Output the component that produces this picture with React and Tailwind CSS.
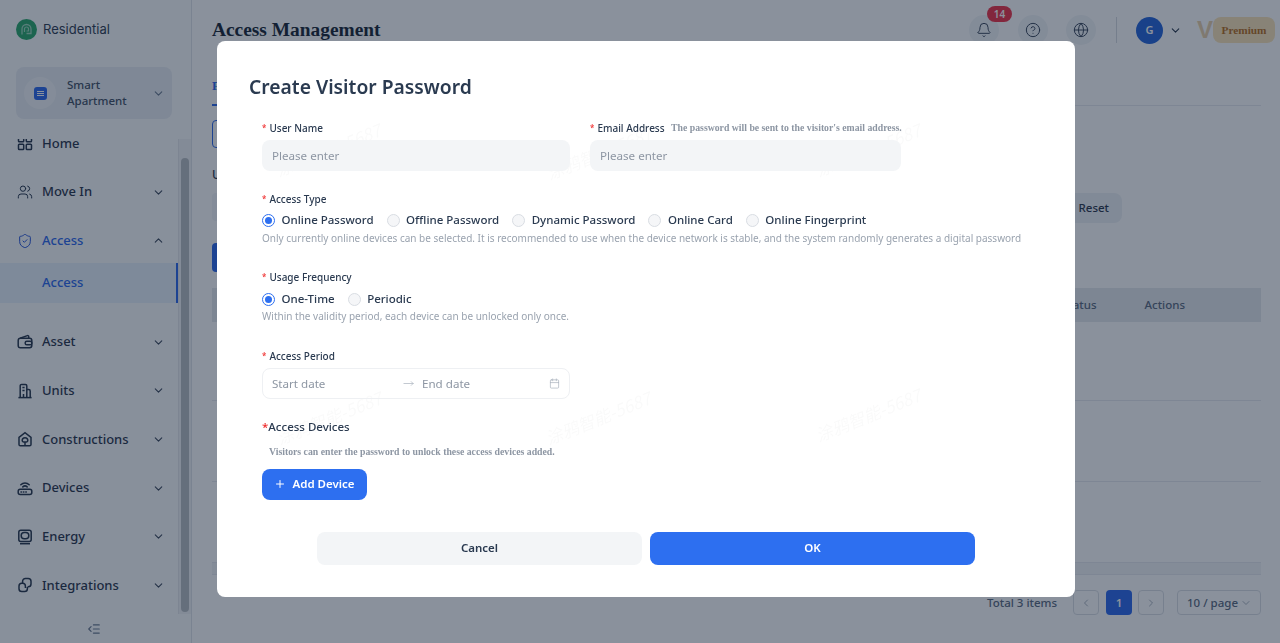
import { Bell, CircleHelp, Globe, ChevronDown, ChevronUp, ChevronLeft, ChevronRight, Users, ShieldCheck, IndentDecrease, Calendar, Plus, MoveRight } from 'lucide-react';

const sans = 'font-["Noto_Sans",sans-serif]';

function HomeIcon(props) {
  return (
    <svg viewBox="0 0 16 16" fill="none" stroke="currentColor" strokeWidth="1.2" {...props}>
      <rect x="1.5" y="1.5" width="5.2" height="5.2" rx="0.8" />
      <rect x="9.3" y="1.5" width="5.2" height="5.2" rx="0.8" />
      <rect x="1.5" y="9.3" width="5.2" height="5.2" rx="0.8" />
      <rect x="9.3" y="9.3" width="5.2" height="5.2" rx="0.8" />
    </svg>
  );
}

function WalletIcon(props) {
  return (
    <svg viewBox="0 0 16 16" fill="none" stroke="currentColor" strokeWidth="1.2" {...props}>
      <rect x="1.2" y="4.2" width="13.6" height="9.6" rx="2.2" />
      <path d="M3 4.2 10.4 1.6c.7-.2 1.3.3 1.3 1v1.6" />
      <rect x="8.2" y="7.2" width="6.6" height="3.6" rx="1.6" />
    </svg>
  );
}

function UnitsIcon(props) {
  return (
    <svg viewBox="0 0 16 16" fill="none" stroke="currentColor" strokeWidth="1.2" {...props}>
      <path d="M3.2 14.6V2.8c0-.8.6-1.400 1.400-1.400h3.800c.8 0 1.400.6 1.400 1.400v11.800" />
      <path d="M9.800 6.600h2c.8 0 1.400.6 1.400 1.400v6.600" />
      <path d="M1.400 14.600h13.200" />
      <path d="M5.400 4.600h2.200M5.400 7.400h2.200M6.500 11v3.600" />
    </svg>
  );
}

function TreeHouseIcon(props) {
  return (
    <svg viewBox="0 0 16 16" fill="none" stroke="currentColor" strokeWidth="1.2" {...props}>
      <path d="M2 6.4 8 1.6l6 4.8v7a1.4 1.4 0 0 1-1.4 1.4H3.4A1.4 1.4 0 0 1 2 13.4z" />
      <path d="M5.2 9.6a2.8 2.8 0 0 1 5.6 0c0 .8-.6 1.3-1.3 1.3H6.5c-.7 0-1.3-.5-1.3-1.3z" />
      <path d="M8 10.9v3.9" />
    </svg>
  );
}

function DeviceIcon(props) {
  return (
    <svg viewBox="0 0 16 16" fill="none" stroke="currentColor" strokeWidth="1.2" strokeLinecap="round" {...props}>
      <rect x="1.2" y="9.200" width="13.600" height="5.400" rx="2" />
      <path d="M4 11.900h.5M6.400 11.900h.5M8.800 11.900h.5" />
      <path d="M3.800 4.800a6 6 0 0 1 8.400 0" />
      <path d="M5.800 6.900a3.200 3.200 0 0 1 4.400 0" />
    </svg>
  );
}

function EnergyIcon(props) {
  return (
    <svg viewBox="0 0 16 16" fill="none" stroke="currentColor" strokeWidth="1.2" {...props}>
      <rect x="1.8" y="1.2" width="12.4" height="11.2" rx="2" />
      <rect x="4.2" y="3.6" width="7.6" height="6.2" rx="3" />
      <path d="M3 14.7h10" />
    </svg>
  );
}

function LinkIcon(props) {
  return (
    <svg viewBox="0 0 16 16" fill="none" stroke="currentColor" strokeWidth="1.2" {...props}>
      <path d="M5.6 6V4.2a2.8 2.8 0 0 1 2.8-2.8h2.8A2.8 2.8 0 0 1 14 4.2V7a2.8 2.8 0 0 1-2.8 2.8h-.6" />
      <path d="M10.4 10v1.8a2.8 2.8 0 0 1-2.8 2.8H4.8A2.8 2.8 0 0 1 2 11.8V9a2.8 2.8 0 0 1 2.8-2.8h.8A2.8 2.8 0 0 1 8.4 9v2" />
    </svg>
  );
}

function LogoIcon() {
  return (
    <svg viewBox="0 0 21 21" className="w-[21px] h-[21px] shrink-0">
      <circle cx="10.5" cy="10.5" r="10.5" fill="#22a565" />
      <path d="M6 15.5V10a4.5 4.5 0 0 1 9 0v4.5h-4.5" fill="none" stroke="#ffffff" strokeOpacity="0.55" strokeWidth="1.3" />
      <path d="M8.5 13v-3a2 2 0 0 1 4 0v2h-2" fill="none" stroke="#ffffff" strokeOpacity="0.55" strokeWidth="1.2" />
    </svg>
  );
}

const menuAfter = [
  { label: 'Asset', icon: WalletIcon },
  { label: 'Units', icon: UnitsIcon },
  { label: 'Constructions', icon: TreeHouseIcon },
  { label: 'Devices', icon: DeviceIcon },
  { label: 'Energy', icon: EnergyIcon },
  { label: 'Integrations', icon: LinkIcon },
];

function MenuRow({ icon: Icon, label, active, open, arrow = true }) {
  const Chevron = open ? ChevronUp : ChevronDown;
  return (
    <div className="h-[48.7px] flex items-center pl-[17px] pr-[13px]">
      <Icon className={`w-[16px] h-[16px] shrink-0 ${active ? 'text-[#1d4ed8]' : 'text-[#1f2f45]'}`} strokeWidth={1.5} />
      <span className={`ml-[9px] flex-1 text-[13px] font-medium ${active ? 'text-[#2563eb]' : 'text-[#1f2f45]'}`}>{label}</span>
      {arrow && <Chevron className="w-[13px] h-[13px] text-[#334155]" />}
    </div>
  );
}

function Sidebar() {
  return (
    <aside className="w-[192px] shrink-0 h-full border-r border-[#dfe3e8] bg-[#fbfcfd] flex flex-col">
      <div className="flex items-center pl-[16px] h-[59px] shrink-0">
        <LogoIcon />
        <span className="ml-[6px] text-[13px] font-['Inter',sans-serif] text-[#26354a]">Residential</span>
      </div>
      <div className="ml-[16px] w-[156px] mt-[8px] h-[52px] rounded-lg bg-[#e8edf2] flex items-center pl-[8px] pr-[7px] shrink-0">
        <div className="w-[32px] h-[32px] rounded-full bg-[#f3f5f8] flex items-center justify-center">
          <div className="w-[13px] h-[13px] rounded-[3px] bg-[#2563eb] flex flex-col justify-center gap-[1px] px-[3px]">
            <div className="h-[1px] bg-white" />
            <div className="h-[1px] bg-white" />
            <div className="h-[1px] bg-white" />
          </div>
        </div>
        <div className="ml-[11px] flex-1 text-[11.5px] leading-[16px] font-medium text-[#3a495e]">Smart<br />Apartment</div>
        <ChevronDown className="w-[13px] h-[13px] text-[#64748b]" />
      </div>

      <div className="mt-[20px] flex-1 min-h-0 flex overflow-hidden">
        <nav className="w-[178px] shrink-0 -mt-[20px]">
          <MenuRow icon={HomeIcon} label="Home" arrow={false} />
          <MenuRow icon={Users} label="Move In" />
          <MenuRow icon={ShieldCheck} label="Access" active open />
          <div className="-mt-[2px] h-10 pl-[42px] flex items-center text-[13px] font-medium text-[#2563eb] bg-[#e6f0fa] border-r-2 border-[#2563eb]">Access</div>
          <div className="mt-[14.6px]">
            {menuAfter.map((m) => (
              <MenuRow key={m.label} icon={m.icon} label={m.label} />
            ))}
          </div>
        </nav>
        <div className="w-[13px] bg-[#f1f3f5] border-l border-[#e4e7eb] pl-[2px] h-[475px]">
          <div className="mt-[19px] w-[8px] h-[454px] rounded-full bg-[#b5babf]" />
        </div>
      </div>

      <div className="h-[29px] flex items-center justify-center pr-[3px] shrink-0">
        <IndentDecrease className="w-[14px] h-[14px] text-[#64748b]" />
      </div>
    </aside>
  );
}

function RoundIcon({ icon: Icon, className = '' }) {
  return (
    <div className={`w-[30px] h-[30px] rounded-full bg-[#f1f4f7] flex items-center justify-center ${className}`}>
      <Icon className="w-[16px] h-[16px] text-[#334155]" strokeWidth={1.5} />
    </div>
  );
}

function PageBehind() {
  return (
    <main className="flex-1 min-w-0 h-full pl-[20px] pr-[19px] flex flex-col">
      <header className="h-[60px] shrink-0 flex items-center">
        <h1 className="flex-1 text-[19.4px] font-bold font-['Liberation_Serif',serif] text-[#111c2e]">Access Management</h1>
        <div className="relative">
          <RoundIcon icon={Bell} />
          <span className="absolute -top-[9px] left-[18px] w-[25px] h-[16px] rounded-full bg-[#ef2b41] text-white text-[10px] font-semibold flex items-center justify-center">14</span>
        </div>
        <RoundIcon icon={CircleHelp} className="ml-[19px]" />
        <RoundIcon icon={Globe} className="ml-[18px]" />
        <div className="ml-[20px] w-px h-[26px] bg-[#d5d9df]" />
        <div className="ml-[19px] w-[27px] h-[27px] rounded-full bg-[#1d5fd8] text-white text-[11px] font-semibold flex items-center justify-center">G</div>
        <ChevronDown className="ml-[6px] w-[13px] h-[13px] text-[#1f2f45]" />
        <span className="ml-[15px] w-[16px] text-[24px] leading-none font-bold font-['Liberation_Sans',sans-serif] text-[#e9cfa6]">V</span>
        <span className="-mr-[14px] w-[62px] h-[26px] rounded-lg bg-[#fbe3b5] text-[#b56a17] text-[11.3px] font-bold font-['Liberation_Serif',serif] flex items-center justify-center">Premium</span>
      </header>
      <div className="h-[46px] shrink-0 border-b border-[#e6e9ee]">
        <div className="w-[40px] h-[46px] border-b-2 border-[#2563eb] pt-[16px] text-[13px] font-bold text-[#2563eb] font-['Liberation_Serif',serif]">F</div>
      </div>
      <div className="mt-[14px] w-[60px] h-[28px] rounded border border-[#2563eb] shrink-0" />
      <div className="mt-[18px] text-[12px] font-medium text-[#1f2f45] shrink-0">U</div>
      <div className="mt-[9px] flex justify-between shrink-0">
        <div className="w-[200px] h-[28px] rounded bg-[#f3f5f8]" />
        <div className="mr-[139px] w-[60px] h-[30px] rounded-lg bg-[#edf0f4] text-[11.5px] font-medium text-[#1f2f45] flex items-center justify-end pr-[13px]">Reset</div>
      </div>
      <div className="mt-[20px] w-[60px] h-[29px] rounded bg-[#2563eb] shrink-0" />
      <div className="mt-[16px] h-[34px] shrink-0 bg-[#e4e8ec] flex items-center justify-end pr-[76px] text-[11.5px] font-medium text-[#54647a]">
        <span className="mr-[48px]">Status</span>
        <span>Actions</span>
      </div>
      <div className="h-[79px] border-b border-[#e6e9ee] shrink-0" />
      <div className="h-[81px] border-b border-[#e6e9ee] shrink-0" />
      <div className="h-[81px] border-b border-[#e6e9ee] shrink-0" />
      <div className="h-[12px] border-b border-[#e6e9ee] bg-[#f3f5f7] shrink-0" />
      <div className="mt-[15px] flex items-center justify-end text-[11.5px] shrink-0">
        <span className="font-medium text-[#54647a] whitespace-nowrap">Total 3 items</span>
        <div className="ml-[16px] w-[26px] h-[25px] rounded border border-[#d9dde3] flex items-center justify-center text-[#a7b0bc]"><ChevronLeft className="w-[12px] h-[12px]" /></div>
        <div className="ml-[7px] w-[26px] h-[25px] rounded bg-[#2563eb] text-white font-semibold flex items-center justify-center">1</div>
        <div className="ml-[6px] w-[26px] h-[25px] rounded border border-[#d9dde3] flex items-center justify-center text-[#a7b0bc]"><ChevronRight className="w-[12px] h-[12px]" /></div>
        <div className="ml-[13px] w-[84px] h-[25px] rounded border border-[#d9dde3] flex items-center justify-between pl-[9px] pr-[8px] font-medium text-[#54647a] whitespace-nowrap">
          10 / page <ChevronDown className="w-[12px] h-[12px] text-[#a7b0bc]" />
        </div>
      </div>
    </main>
  );
}

function Label({ children, className = '' }) {
  return (
    <div className={`h-[16px] flex items-center text-[10px] font-medium text-[#2a3a50] whitespace-nowrap ${className}`}>
      <span className="text-[#ef2b2b] text-[8px] mr-[3px]">*</span>
      {children}
    </div>
  );
}

function Radio({ label, checked }) {
  return (
    <label className="flex items-center mr-[13px]">
      {checked ? (
        <span className="w-[13px] h-[13px] rounded-full border border-[#2d6ff0] flex items-center justify-center">
          <span className="w-[7px] h-[7px] rounded-full bg-[#2d6ff0]" />
        </span>
      ) : (
        <span className="w-[13px] h-[13px] rounded-full border border-[#d9dde3] bg-[#f5f6f8]" />
      )}
      <span className="ml-[6.5px] text-[11.5px] font-medium text-[#2a3a50]">{label}</span>
    </label>
  );
}

function Hint({ children, className = '' }) {
  return <p className={`h-[16px] flex items-center text-[10px] text-[#9aa3af] whitespace-nowrap ${className}`}>{children}</p>;
}

const marks = [
  'left-[55px] top-[100px]', 'left-[326px] top-[103px]', 'left-[595px] top-[100px]',
  'left-[56px] top-[368px]', 'left-[325px] top-[368px]', 'left-[595px] top-[365px]',
];

function Modal() {
  return (
    <div className="fixed inset-0 bg-[#16243a]/50">
      <div className={`absolute left-[217px] top-[41px] w-[858px] h-[556px] rounded-lg bg-white overflow-hidden ${sans}`}>
        {marks.map((pos) => (
          <span key={pos} className={`absolute ${pos} -rotate-[22deg] text-[17px] leading-none italic text-[#0f172a]/[0.025] whitespace-nowrap pointer-events-none font-["Noto_Sans_CJK_SC",sans-serif]`}>涂鸦智能-5687</span>
        ))}

        <h2 className="pl-[32px] pt-[31px] text-[19.3px] leading-[30px] font-semibold text-[#2a3a50]">Create Visitor Password</h2>

        <div className="relative pl-[45px] pt-[18px]">
          <div className="flex gap-[20px]">
            <div className="w-[308px]">
              <Label>User Name</Label>
              <div className="mt-[4px] h-[31px] rounded-lg bg-[#f3f5f7] flex items-center pl-[10px] text-[11.6px] text-[#8d96a3]">Please enter</div>
            </div>
            <div className="w-[311px]">
              <Label>
                Email Address
                <span className="ml-[6.5px] text-[9.75px] font-bold font-['Liberation_Serif',serif] text-[#8d96a3]">The password will be sent to the visitor's email address.</span>
              </Label>
              <div className="mt-[4px] h-[31px] rounded-lg bg-[#f3f5f7] flex items-center pl-[10px] text-[11.6px] text-[#8d96a3]">Please enter</div>
            </div>
          </div>

          <Label className="mt-[20px]">Access Type</Label>
          <div className="mt-[4px] h-[18px] flex items-center">
            <Radio label="Online Password" checked />
            <Radio label="Offline Password" />
            <Radio label="Dynamic Password" />
            <Radio label="Online Card" />
            <Radio label="Online Fingerprint" />
          </div>
          <Hint className="mt-[1px]">Only currently online devices can be selected. It is recommended to use when the device network is stable, and the system randomly generates a digital password</Hint>

          <Label className="mt-[23px]">Usage Frequency</Label>
          <div className="mt-[5px] h-[18px] flex items-center">
            <Radio label="One-Time" checked />
            <Radio label="Periodic" />
          </div>
          <Hint>Within the validity period, each device can be unlocked only once.</Hint>

          <Label className="mt-[24px]">Access Period</Label>
          <div className="mt-[4px] w-[308px] h-[31px] rounded-lg border border-[#eef0f3] flex items-center pl-[9px] pr-[9px] text-[11.6px] text-[#8d96a3]">
            <span className="w-[131px]">Start date</span>
            <MoveRight className="w-[11px] h-[11px] text-[#a7b0bc]" strokeWidth={1.5} />
            <span className="ml-[8px] flex-1">End date</span>
            <Calendar className="w-[11px] h-[11px] text-[#a7b0bc]" strokeWidth={1.5} />
          </div>

          <div className="mt-[20px] h-[16px] flex items-center text-[11.5px] font-medium text-[#2a3a50]">
            <span className="text-[#ef2b2b]">*</span>Access Devices
          </div>
          <p className="mt-[10px] h-[14px] flex items-center pl-[7px] text-[9.75px] font-bold font-['Liberation_Serif',serif] text-[#8d96a3]">Visitors can enter the password to unlock these access devices added.</p>
          <button className="mt-[10px] w-[105px] h-[31px] pb-[1px] rounded-lg bg-[#2d6ff0] text-white text-[11.5px] font-semibold flex items-center justify-center gap-[6px]">
            <Plus className="w-[12px] h-[12px]" strokeWidth={2} /> Add Device
          </button>
        </div>

        <div className="mt-[32px] flex justify-center gap-[8px]">
          <button className="w-[325px] h-[33px] pb-[2px] rounded-lg bg-[#f3f5f7] text-[11.5px] font-semibold text-[#2a3a50]">Cancel</button>
          <button className="w-[325px] h-[33px] pb-[2px] rounded-lg bg-[#2d6ff0] text-[11.5px] font-semibold text-white">OK</button>
        </div>
      </div>
    </div>
  );
}

export default function App() {
  return (
    <div className={`w-full h-screen overflow-hidden flex bg-white ${sans}`}>
      <Sidebar />
      <PageBehind />
      <Modal />
    </div>
  );
}
